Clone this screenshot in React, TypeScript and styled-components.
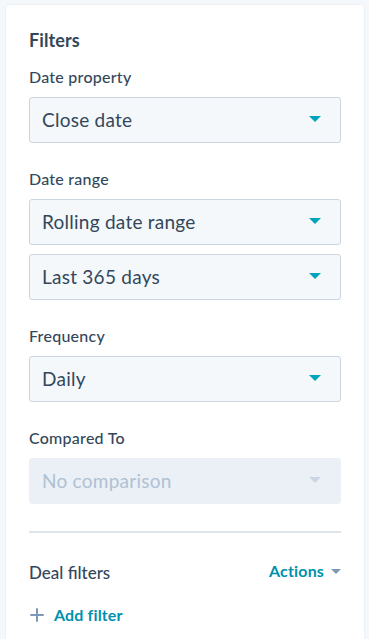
import React from "react";
import styled, { createGlobalStyle } from "styled-components";

const Global = createGlobalStyle`
  html, body { margin: 0; padding: 0; background: #f5f8fa; }
  body { font-family: Lato, "Open Sans", sans-serif; color: #33475b; -webkit-font-smoothing: antialiased; }
  * { box-sizing: border-box; }
`;

const Page = styled.div`
  padding: 5px 5px 0 6px;
  height: 639px;
  overflow: hidden;
`;

const Card = styled.div`
  width: 358px;
  min-height: 700px;
  background: #ffffff;
  border-radius: 4px;
  box-shadow: 0 0 0 1px #eef1f5;
  padding: 23px 23px 0 23px;
  display: flex;
  flex-direction: column;
`;

const Heading = styled.h2`
  margin: 0;
  font-size: 18px;
  line-height: 24px;
  font-weight: 700;
  letter-spacing: 0.1px;
  color: #33475b;
`;

const Field = styled.div<{ $first?: boolean }>`
  display: flex;
  flex-direction: column;
  gap: 9px;
  margin-top: ${(p) => (p.$first ? "14px" : "25px")};
`;

const Stack = styled.div`
  display: flex;
  flex-direction: column;
  gap: 9px;
`;

const Label = styled.div`
  font-size: 16px;
  line-height: 22px;
  font-weight: 500;
  letter-spacing: 0.25px;
  color: #33475b;
`;

const Select = styled.div<{ $disabled?: boolean }>`
  height: 46px;
  border-radius: 3px;
  border: 1px solid ${(p) => (p.$disabled ? "#eaf0f6" : "#cbd6e2")};
  background: ${(p) => (p.$disabled ? "#eaf0f6" : "#f5f8fa")};
  display: flex;
  align-items: center;
  justify-content: space-between;
  padding: 0 19px 2px 12px;
  font-size: 19px;
  letter-spacing: 0.25px;
  color: ${(p) => (p.$disabled ? "#b0c1d4" : "#33475b")};
`;

const Caret = styled.span<{ $color: string; $w?: number; $h?: number }>`
  display: inline-block;
  width: 0;
  height: 0;
  border-left: ${(p) => (p.$w ?? 13) / 2}px solid transparent;
  border-right: ${(p) => (p.$w ?? 13) / 2}px solid transparent;
  border-top: ${(p) => p.$h ?? 6}px solid ${(p) => p.$color};
`;

const Divider = styled.hr`
  border: none;
  height: 2px;
  background: #dfe3eb;
  margin: 27px 0 0 0;
`;

const Row = styled.div`
  display: flex;
  align-items: center;
  justify-content: space-between;
  margin-top: 24px;
`;

const SubHead = styled.div`
  font-size: 17px;
  line-height: 24px;
  font-weight: 500;
  color: #33475b;
  margin-top: 4px;
`;

const LinkButton = styled.button`
  display: inline-flex;
  align-items: center;
  gap: 7px;
  background: none;
  border: none;
  padding: 0;
  font-family: inherit;
  font-size: 16px;
  line-height: 22px;
  font-weight: 700;
  letter-spacing: 0.15px;
  color: #0091ae;
  cursor: pointer;
`;

const AddRow = styled.div`
  margin-top: 19px;
  display: flex;
`;

const Plus = styled.svg`
  width: 14px;
  height: 14px;
  margin-left: 1px;
  margin-right: 3px;
`;

function SelectBox({ value, disabled }: { value: string; disabled?: boolean }) {
  return (
    <Select $disabled={disabled}>
      <span>{value}</span>
      <Caret $color={disabled ? "#cbd6e2" : "#00a4bd"} />
    </Select>
  );
}

export default function App() {
  return (
    <>
      <Global />
      <Page>
        <Card>
          <Heading>Filters</Heading>
          <Field $first>
            <Label>Date property</Label>
            <SelectBox value="Close date" />
          </Field>
          <Field>
            <Label>Date range</Label>
            <Stack>
              <SelectBox value="Rolling date range" />
              <SelectBox value="Last 365 days" />
            </Stack>
          </Field>
          <Field>
            <Label>Frequency</Label>
            <SelectBox value="Daily" />
          </Field>
          <Field>
            <Label>Compared To</Label>
            <SelectBox value="No comparison" disabled />
          </Field>
          <Divider />
          <Row>
            <SubHead>Deal filters</SubHead>
            <LinkButton>
              Actions
              <Caret $color="#7c98b6" $w={11} $h={5} />
            </LinkButton>
          </Row>
          <AddRow>
            <LinkButton>
              <Plus viewBox="0 0 14 14">
                <path d="M7 1v12M1 7h12" stroke="#7c98b6" strokeWidth="2" strokeLinecap="round" />
              </Plus>
              Add filter
            </LinkButton>
          </AddRow>
        </Card>
      </Page>
    </>
  );
}
